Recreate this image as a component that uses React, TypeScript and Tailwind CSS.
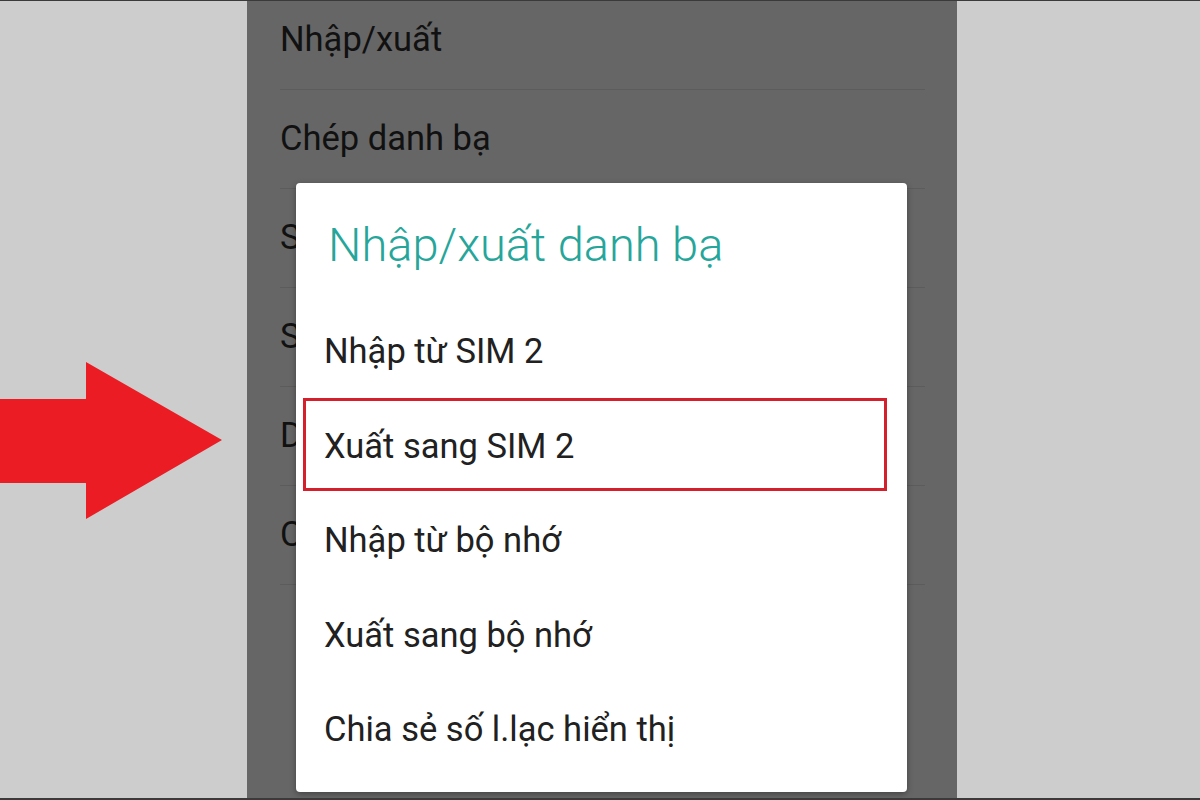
const bgRows = ['Nhập/xuất', 'Chép danh bạ', 'S', 'S', 'D', 'C'];

const items = ['Nhập từ SIM 2', 'Xuất sang SIM 2', 'Nhập từ bộ nhớ', 'Xuất sang bộ nhớ', 'Chia sẻ số l.lạc hiển thị'];

function Arrow() {
  return (
    <svg width="247" height="800" viewBox="0 0 247 800">
      <polygon points="0,398 86,398 86,361 222,439 86,518 86,482 0,482" fill="#ec1c24" />
    </svg>
  );
}

export default function App() {
  return (
    <div className="flex h-[800px] w-[1200px] overflow-hidden border-t border-b-2 border-[#3a3a3a] bg-[#cdcdcd] font-['Roboto','Noto_Sans',sans-serif]">
      <div className="w-[247px] shrink-0">
        <Arrow />
      </div>

      <div className="relative w-[710px] shrink-0 overflow-hidden bg-[#666666]">
        <div className="-mt-[10px] pl-[33px] pr-[32px]">
          {bgRows.map((row, i) => (
            <div key={i} className="flex h-[99px] items-center border-b border-[#5c5c5c] text-[34.5px] text-[#111111]">
              {row}
            </div>
          ))}
        </div>

        <div className="absolute left-[49px] top-[182px] h-[609px] w-[611px] rounded-[4px] bg-white shadow-[0_2px_6px_rgba(0,0,0,0.35)]">
          <div className="flex h-[122px] items-center pl-[32px] pt-[2px] text-[47px] font-light text-[#26a69a]">
            Nhập/xuất danh bạ
          </div>
          {items.map((item, i) => (
            <div key={item} className="relative flex h-[94.5px] items-center pl-[28px] text-[34.5px] text-[#212121]">
              {item}
              {i === 1 && (
                <span className="absolute bottom-[3px] left-[7px] right-[20px] top-[-2px] border-[3px] border-[#d4202c]" />
              )}
            </div>
          ))}
        </div>
      </div>

      <div className="flex-1" />
    </div>
  );
}
